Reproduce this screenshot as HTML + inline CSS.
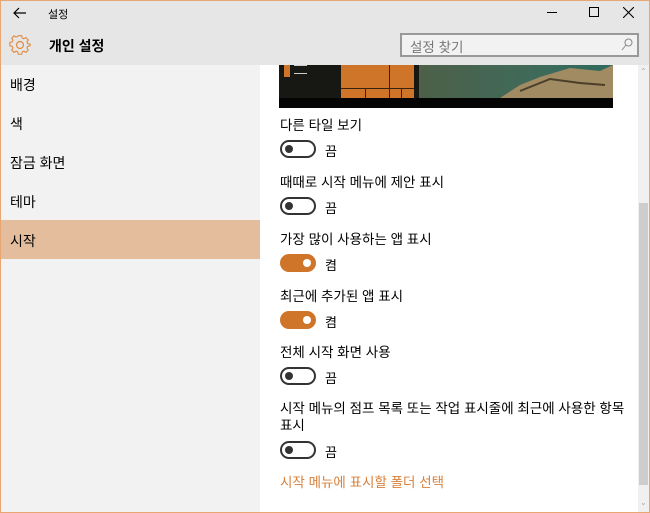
<!DOCTYPE html>
<html><head><meta charset="utf-8">
<style>
*{margin:0;padding:0;box-sizing:border-box}
body{width:650px;height:513px;overflow:hidden;background:#fff;font-family:"Liberation Sans","Noto Sans CJK KR",sans-serif;color:#000;position:relative}
.abs{position:absolute}
.frame{left:0;top:0;width:650px;height:513px;border:1px solid #e8a672;pointer-events:none;z-index:10}
.title{left:0;top:0;width:650px;height:65px;background:#e6e6e6}
.side{left:0;top:65px;width:260px;height:448px;background:#f2f2f2}
.nav{position:absolute;left:10px;font-size:14px;color:#000}
.sel{left:1px;top:220px;width:259px;height:39px;background:#e3bd9c}
.lbl{position:absolute;left:280px;font-size:13.5px;color:#000}
.tg{position:absolute;left:280px;width:36px;height:18px;border-radius:9px;border:2px solid #333}
.tg::after{content:"";position:absolute;left:3px;top:3px;width:8px;height:8px;border-radius:50%;background:#333}
.tg.on{background:#cf7529;border-color:#cf7529}
.tg.on::after{left:auto;right:3px;background:#fff}
.st{position:absolute;left:325px;font-size:13px}
</style></head><body>
<div class="abs title"></div>
<svg class="abs" style="left:12px;top:6px" width="16" height="14" viewBox="0 0 16 14"><path d="M14 7H2M7 2L2 7l5 5" stroke="#000" stroke-width="1.2" fill="none"/></svg>
<div class="abs" style="left:48px;top:6px;font-size:11px">설정</div>
<div class="abs" style="left:547px;top:12px;width:10px;height:1px;background:#000"></div>
<div class="abs" style="left:589px;top:7px;width:10px;height:10px;border:1px solid #000"></div>
<svg class="abs" style="left:623px;top:7px" width="11" height="11"><path d="M0 0L11 11M11 0L0 11" stroke="#000" stroke-width="1.1"/></svg>
<svg class="abs" style="left:9px;top:34px" width="22" height="22" viewBox="0 0 24 24"><path d="M10 2h4l.6 2.8 2 .9 2.4-1.5 2.8 2.8-1.5 2.4.9 2L24 12v0l0 2-2.8.6-.9 2 1.5 2.4-2.8 2.8-2.4-1.5-2 .9L14 24h-4l-.6-2.8-2-.9-2.4 1.5-2.8-2.8 1.5-2.4-.9-2L0 14v-4l2.8-.6.9-2-1.5-2.4 2.8-2.8 2.4 1.5 2-.9z" transform="scale(.92) translate(1 0)" fill="none" stroke="#e08a3c" stroke-width="1.3"/><circle cx="12" cy="12" r="3.8" fill="none" stroke="#e08a3c" stroke-width="1.3"/></svg>
<div class="abs" style="left:49px;top:36px;font-size:14px;font-weight:bold">개인 설정</div>
<div class="abs" style="left:400px;top:33px;width:239px;height:24px;border:2px solid #999;background:#f2f2f2"></div>
<div class="abs" style="left:410px;top:36px;font-size:13.5px;color:#777">설정 찾기</div>
<svg class="abs" style="left:621px;top:38px" width="12" height="13"><circle cx="7.5" cy="4.5" r="3.5" fill="none" stroke="#888"/><path d="M5 7L1 12" stroke="#888"/></svg>

<div class="abs side"></div>
<div class="abs sel"></div>
<div class="nav" style="top:75px">배경</div>
<div class="nav" style="top:114px">색</div>
<div class="nav" style="top:153px">잠금 화면</div>
<div class="nav" style="top:192px">테마</div>
<div class="nav" style="top:231px">시작</div>

<div class="abs" style="left:279px;top:65px;width:334px;height:43px;background:#171714"></div>
<div class="abs" style="left:419px;top:65px;width:194px;height:33px;background:linear-gradient(90deg,#4d6048,#3f6a5a 60%,#2f6b5e)"></div>
<svg class="abs" style="left:500px;top:65px" width="113" height="33"><path d="M0 33L20 20 40 12 70 3 100 6 113 0V33Z" fill="#a08b62"/><path d="M20 26L50 14 80 18 105 20" stroke="#4b3f2a" stroke-width="2" fill="none"/></svg>
<div class="abs" style="left:279px;top:98px;width:334px;height:10px;background:#050505"></div>
<div class="abs" style="left:341px;top:65px;width:73px;height:33px;background:#cf7529"></div>
<div class="abs" style="left:341px;top:88px;width:73px;height:1px;background:#3a2210"></div>
<div class="abs" style="left:389px;top:65px;width:1px;height:33px;background:#3a2210"></div>
<div class="abs" style="left:365px;top:89px;width:1px;height:9px;background:#3a2210"></div>
<div class="abs" style="left:401px;top:89px;width:1px;height:9px;background:#3a2210"></div>
<div class="abs" style="left:284px;top:65px;width:6px;height:12px;background:#cf7529"></div>
<div class="abs" style="left:294px;top:73px;width:13px;height:1px;background:#ccc"></div>
<div class="abs" style="left:294px;top:65px;width:13px;height:1px;background:#ccc"></div>

<div class="lbl" style="top:114px">다른 타일 보기</div>
<div class="tg" style="top:140px"></div><div class="st" style="top:141px">끔</div>
<div class="lbl" style="top:171px">때때로 시작 메뉴에 제안 표시</div>
<div class="tg" style="top:197px"></div><div class="st" style="top:198px">끔</div>
<div class="lbl" style="top:228px">가장 많이 사용하는 앱 표시</div>
<div class="tg on" style="top:254px"></div><div class="st" style="top:255px">켬</div>
<div class="lbl" style="top:285px">최근에 추가된 앱 표시</div>
<div class="tg on" style="top:311px"></div><div class="st" style="top:312px">켬</div>
<div class="lbl" style="top:341px">전체 시작 화면 사용</div>
<div class="tg" style="top:367px"></div><div class="st" style="top:368px">끔</div>
<div class="lbl" style="top:397px">시작 메뉴의 점프 목록 또는 작업 표시줄에 최근에 사용한 항목</div>
<div class="lbl" style="top:414px">표시</div>
<div class="tg" style="top:441px"></div><div class="st" style="top:442px">끔</div>
<div class="lbl" style="top:471px;color:#d9803a">시작 메뉴에 표시할 폴더 선택</div>

<div class="abs" style="left:638px;top:65px;width:11px;height:447px;background:#f0f0f0"></div>
<div class="abs" style="left:639px;top:203px;width:9px;height:282px;background:#cdcdcd"></div>
<div class="abs" style="left:640px;top:67px;font-size:8px;color:#aaa">⌃</div>
<div class="abs" style="left:640px;top:498px;font-size:8px;color:#aaa">⌄</div>
<div class="abs frame"></div>
</body></html>
